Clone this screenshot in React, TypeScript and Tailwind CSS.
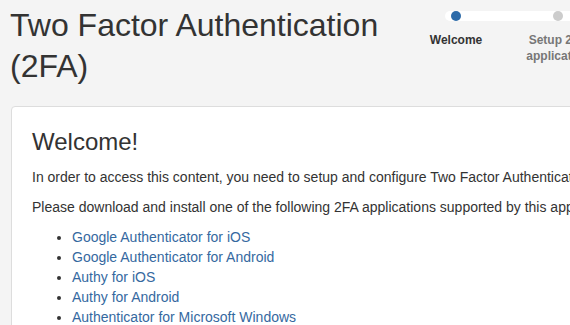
import React from "react";

const apps: string[] = [
  "Google Authenticator for iOS",
  "Google Authenticator for Android",
  "Authy for iOS",
  "Authy for Android",
  "Authenticator for Microsoft Windows",
];

const steps = [
  { label: "Welcome", active: true },
  { label: "Setup 2FA application", active: false },
  { label: "Verify", active: false },
];

const App: React.FC = () => {
  return (
    <div className="w-[570px] h-[325px] overflow-hidden bg-[#f4f4f4] font-['Liberation_Sans',Arial,sans-serif] text-[#333]">
      <div className="w-[760px] pl-[10px] pt-[5px]">
        <div className="flex">
          <h1 className="w-[395px] shrink-0 text-[32px] leading-[41px] font-normal">
            Two Factor Authentication (2FA)
          </h1>
          <div className="relative mt-[6px]">
            <div className="absolute left-[40px] right-0 top-0 h-[10px] rounded-full bg-white"></div>
            <div className="relative flex">
              {steps.map((s) => (
                <div key={s.label} className="w-[102px] flex flex-col items-center">
                  <span
                    className={
                      s.active
                        ? "w-[10px] h-[10px] rounded-full bg-[#2c6aa8]"
                        : "w-[10px] h-[10px] rounded-full bg-[#cccccc]"
                    }
                  ></span>
                  <span
                    className={
                      s.active
                        ? "mt-[11px] w-[80px] text-center text-[12px] leading-[16px] font-bold text-[#333]"
                        : "mt-[11px] w-[80px] text-center text-[12px] leading-[16px] font-bold text-[#777]"
                    }
                  >
                    {s.label}
                  </span>
                </div>
              ))}
            </div>
          </div>
        </div>
        <div className="mt-[19px] ml-[1px] rounded-[4px] border border-[#dddddd] bg-white pl-[20px] pt-[22px] pb-[20px]">
          <h3 className="text-[24px] leading-[26px] font-normal mb-[12px]">Welcome!</h3>
          <p className="text-[14px] leading-[20px] mb-[10px] whitespace-nowrap">
            In order to access this content, you need to setup and configure Two Factor Authentication (2FA).
          </p>
          <p className="text-[14px] leading-[20px] mb-[10px] whitespace-nowrap">
            Please download and install one of the following 2FA applications supported by this application:
          </p>
          <ul className="list-disc pl-[40px] text-[14px] leading-[20px]">
            {apps.map((a) => (
              <li key={a}>
                <a href="#" className="text-[#35699f]">
                  {a}
                </a>
              </li>
            ))}
          </ul>
        </div>
      </div>
    </div>
  );
};

export default App;
